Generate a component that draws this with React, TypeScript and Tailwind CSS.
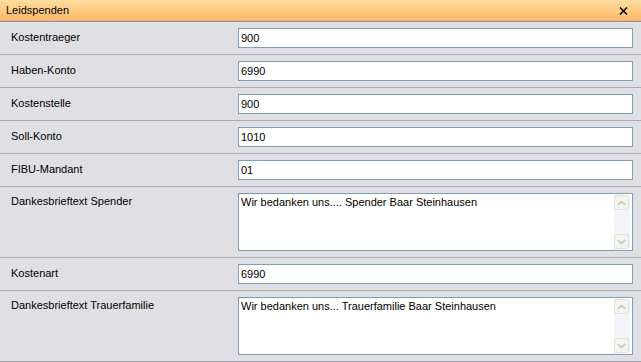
import React from "react";

const font = { fontFamily: '"Liberation Sans", Arial, sans-serif' };

function ScrollBtn({ up }: { up: boolean }) {
  return (
    <div className="w-[15px] h-[15px] rounded-[2px] border border-[#e3e2d9] bg-[#f4f4ee] flex items-center justify-center">
      <svg width="9" height="6" viewBox="0 0 9 6">
        {up ? (
          <path d="M1 5 L4.5 1.5 L8 5" fill="none" stroke="#c4c4c0" strokeWidth="1.6" />
        ) : (
          <path d="M1 1 L4.5 4.5 L8 1" fill="none" stroke="#c4c4c0" strokeWidth="1.6" />
        )}
      </svg>
    </div>
  );
}

function InputRow({ label, value }: { label: string; value: string }) {
  return (
    <div className="flex h-[33px] border-b border-[#a8a7b2]">
      <div className="w-[238px] pl-[11px] pt-[9px] text-[11px] leading-[13px] text-black">{label}</div>
      <div className="pt-[6px]">
        <div className="w-[395px] h-[20px] border border-[#7f9db9] bg-white pl-[2px] text-[11px] leading-[18px] text-black">
          {value}
        </div>
      </div>
    </div>
  );
}

function AreaRow({ label, value }: { label: string; value: string }) {
  return (
    <div className="flex h-[71px] border-b border-[#a8a7b2]">
      <div className="w-[238px] pl-[11px] pt-[8px] text-[11px] leading-[13px] text-black">{label}</div>
      <div className="pt-[6px]">
        <div className="w-[395px] h-[58px] border border-[#7f9db9] bg-white flex">
          <div className="flex-1 pl-[2px] pt-[1px] text-[11px] leading-[15px] text-black">{value}</div>
          <div className="w-[16px] mr-[2px] my-[1px] bg-[#f3f3f9] flex flex-col justify-between">
            <ScrollBtn up />
            <ScrollBtn up={false} />
          </div>
        </div>
      </div>
    </div>
  );
}

export default function App() {
  return (
    <div style={font} className="w-[641px] h-[362px] bg-[#e0dfe4] overflow-hidden">
      <div className="h-[22px] border-b border-[#7f8eb4] bg-gradient-to-b from-[#fedd9e] to-[#fcb766] flex items-center justify-between pl-[6px] pr-[13px]">
        <span className="text-[11px] text-black">Leidspenden</span>
        <svg width="9" height="8" viewBox="0 0 9 8">
          <path d="M1 0.5 L8 7.5 M8 0.5 L1 7.5" stroke="#000" strokeWidth="1.5" />
        </svg>
      </div>
      <InputRow label="Kostentraeger" value="900" />
      <InputRow label="Haben-Konto" value="6990" />
      <InputRow label="Kostenstelle" value="900" />
      <InputRow label="Soll-Konto" value="1010" />
      <InputRow label="FIBU-Mandant" value="01" />
      <AreaRow label="Dankesbrieftext Spender" value="Wir bedanken uns.... Spender Baar Steinhausen" />
      <InputRow label="Kostenart" value="6990" />
      <AreaRow label="Dankesbrieftext Trauerfamilie" value="Wir bedanken uns... Trauerfamilie Baar Steinhausen" />
    </div>
  );
}
